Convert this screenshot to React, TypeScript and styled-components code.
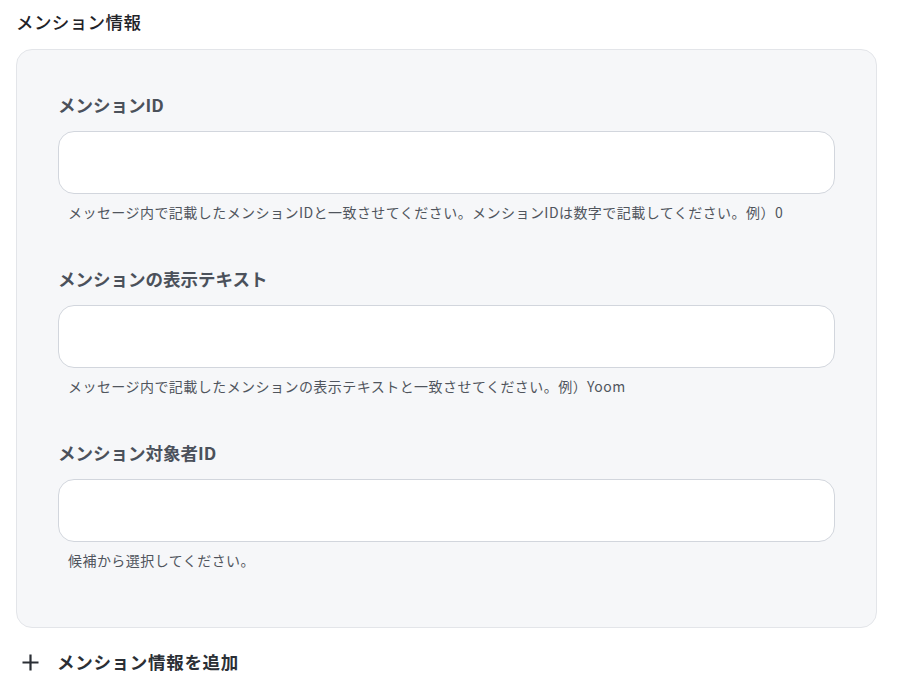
import React from "react";
import styled, { createGlobalStyle } from "styled-components";

const Global = createGlobalStyle`
  html, body { margin: 0; padding: 0; background: #ffffff; }
  body { font-family: "Noto Sans CJK JP", "Noto Sans", sans-serif; }
  * { box-sizing: border-box; }
`;

const Page = styled.div`
  width: 916px;
  padding: 8px 39px 0 16px;
`;

const Title = styled.h2`
  margin: 0 0 13px 0;
  font-size: 17.5px;
  letter-spacing: 0.4px;
  line-height: 28px;
  font-weight: 500;
  color: #1f2328;
`;

const Panel = styled.div`
  background: #f6f7f9;
  border: 1px solid #e3e5e9;
  border-radius: 16px;
  padding: 42px 41px 57px 41px;
  display: flex;
  flex-direction: column;
  gap: 44px;
`;

const Field = styled.div`
  display: flex;
  flex-direction: column;
`;

const Label = styled.label`
  font-size: 17.5px;
  line-height: 26px;
  font-weight: 700;
  color: #4b515b;
  margin-bottom: 13px;
`;

const Input = styled.input`
  height: 63px;
  border: 1px solid #d2d6dd;
  border-radius: 16px;
  background: #ffffff;
  outline: none;
  padding: 0 16px;
  font-size: 15px;
  font-family: inherit;
`;

const Help = styled.p`
  margin: 8px 0 0 10px;
  font-size: 14px;
  letter-spacing: 0.45px;
  line-height: 20px;
  color: #50555d;
`;

const AddRow = styled.button`
  display: flex;
  align-items: center;
  gap: 17px;
  margin-top: 20px;
  padding: 0 0 0 5px;
  border: none;
  background: none;
  font-family: inherit;
  font-size: 17.5px;
  letter-spacing: 0.7px;
  line-height: 28px;
  font-weight: 700;
  color: #2b2f35;
  cursor: pointer;
`;

const fields = [
  {
    label: "メンションID",
    help: "メッセージ内で記載したメンションIDと一致させてください。メンションIDは数字で記載してください。例）0",
  },
  {
    label: "メンションの表示テキスト",
    help: "メッセージ内で記載したメンションの表示テキストと一致させてください。例）Yoom",
  },
  {
    label: "メンション対象者ID",
    help: "候補から選択してください。",
  },
];

export default function App() {
  return (
    <>
      <Global />
      <Page>
        <Title>メンション情報</Title>
        <Panel>
          {fields.map((f) => (
            <Field key={f.label}>
              <Label>{f.label}</Label>
              <Input />
              <Help>{f.help}</Help>
            </Field>
          ))}
        </Panel>
        <AddRow>
          <svg width="19" height="19" viewBox="0 0 19 19">
            <path d="M9.5 1.5v16M1.5 9.5h16" stroke="#2b2f35" strokeWidth="2.2" />
          </svg>
          メンション情報を追加
        </AddRow>
      </Page>
    </>
  );
}
